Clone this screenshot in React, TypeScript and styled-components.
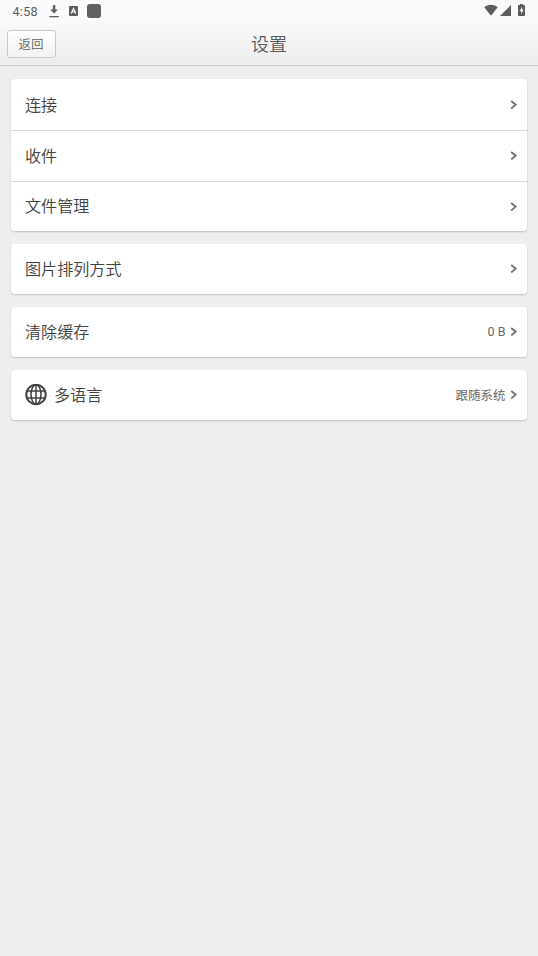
import React from 'react';
import styled, { createGlobalStyle } from 'styled-components';

type Item = {
  label: string;
  value?: string;
  globe?: boolean;
};

const groups: Item[][] = [
  [{ label: '连接' }, { label: '收件' }, { label: '文件管理' }],
  [{ label: '图片排列方式' }],
  [{ label: '清除缓存', value: '0 B' }],
  [{ label: '多语言', value: '跟随系统', globe: true }],
];

const DownloadIcon = () => (
  <svg width="10" height="13" viewBox="0 0 10 13">
    <path d="M3.900 0h2.400v4.500H9L5.100 8.600 1.200 4.500h2.700z" fill="#606060" />
    <path d="M0.400 11h9.400v1.300H0.400z" fill="#606060" />
  </svg>
);

const LetterIcon = () => (
  <svg width="9" height="10" viewBox="0 0 9 10">
    <rect width="9" height="10" rx="1.2" fill="#5c5c5c" />
    <path d="M2.200 7.600 4.500 2.400 6.800 7.600M3.200 6h2.600" fill="none" stroke="#fff" strokeWidth="1.200" />
  </svg>
);

const WifiIcon = () => (
  <svg width="14" height="12" viewBox="0 0 14 12">
    <path d="M7 11.800 0.300 3.200C2 1.600 4.300 0.700 7 0.700s5 .9 6.700 2.500z" fill="#5c5c5c" />
  </svg>
);

const SignalIcon = () => (
  <svg width="11" height="11" viewBox="0 0 11 11">
    <path d="M11 0v11H0z" fill="#5c5c5c" />
  </svg>
);

const BatteryIcon = () => (
  <svg width="7" height="12" viewBox="0 0 7 12">
    <path d="M2.100 0h2.800v1.100h1.300q.8 0 .8.8v9.300q0 .8-.8.8H.8q-.8 0-.8-.8V1.900q0-.8.8-.8h1.300z" fill="#5c5c5c" />
    <path d="M4.200 2.700 1.500 6.900h1.600v3.200l2.500-4.400H4.200z" fill="#fff" />
  </svg>
);

const GlobeIcon = () => (
  <svg width="22" height="22" viewBox="0 0 22 22" fill="none" stroke="#404040" strokeWidth="2">
    <circle cx="11" cy="10.500" r="9.700" />
    <ellipse cx="11" cy="10.500" rx="5" ry="9.700" strokeWidth="1.500" />
    <path d="M11 1v19M2 7h18M2 14h18" strokeWidth="1.500" />
  </svg>
);

const ArrowIcon = () => (
  <svg width="7" height="9" viewBox="0 0 7 9">
    <path d="M1.200 1 5.700 4.700 1.200 8.400" fill="none" stroke="#737373" strokeWidth="1.900" />
  </svg>
);

const App = () => {
  return (
    <>
      <GlobalStyle />
      <Header>
        <StatusBar>
          <StatusLeft>
            <Time>4:58</Time>
            <DownloadIcon />
            <LetterIcon />
            <AppDot />
          </StatusLeft>
          <StatusRight>
            <WifiIcon />
            <SignalIcon />
            <BatteryIcon />
          </StatusRight>
        </StatusBar>
        <NavBar>
          <BackButton>返回</BackButton>
          <Title>设置</Title>
        </NavBar>
      </Header>
      <Content>
        {groups.map((items) => (
          <Card key={items[0].label}>
            {items.map((item) => (
              <Row key={item.label}>
                {item.globe && <GlobeIcon />}
                <Label>{item.label}</Label>
                {item.value && <Value>{item.value}</Value>}
                <ArrowIcon />
              </Row>
            ))}
          </Card>
        ))}
      </Content>
    </>
  );
};

export default App;

const GlobalStyle = createGlobalStyle`
  * {
    box-sizing: border-box;
  }
  body {
    margin: 0;
    min-height: 100vh;
    background: #eeeeee;
    font-family: Roboto, 'Noto Sans CJK SC', sans-serif;
    font-weight: 350;
  }
  svg {
    display: block;
    flex-shrink: 0;
  }
`
const Header = styled.header`
  height: 66px;
  border-bottom: 1px solid #c8c8c8;
  background: linear-gradient(#fafafa 0, #fafafa 22px, #ececec 100%);
`
const StatusBar = styled.div`
  display: flex;
  align-items: center;
  justify-content: space-between;
  height: 22px;
  padding: 0 13px 0 12.5px;
`
const StatusLeft = styled.div`
  display: flex;
  align-items: center;
`
const Time = styled.span`
  width: 36.5px;
  color: #5c5c5c;
  font-size: 12.5px;
  font-weight: 400;
  letter-spacing: 0.3px;

  & + svg {
    margin-right: 10px;
  }
`
const AppDot = styled.span`
  width: 14px;
  height: 14px;
  margin-left: 8.5px;
  border-radius: 3px;
  background: #606060;
`
const StatusRight = styled.div`
  display: flex;
  align-items: center;
  margin-top: -2px;

  svg:nth-child(2) {
    margin: 0 7px 0 2px;
  }
`
const NavBar = styled.div`
  display: grid;
  grid-template-columns: 49px 1fr 49px;
  align-items: center;
  height: 43px;
  padding: 0 7px;
`
const BackButton = styled.button`
  height: 28px;
  padding: 0 1px 0 0;
  color: #606060;
  font-family: inherit;
  font-size: 12.5px;
  font-weight: 350;
  border: 1px solid #c8c8c8;
  border-radius: 3px;
  background: linear-gradient(#ffffff, #f2f2f2);
`
const Title = styled.h1`
  margin: 0;
  padding-bottom: 1px;
  color: #5a5a5a;
  font-size: 18px;
  font-weight: 350;
  text-align: center;
`
const Content = styled.main`
  display: flex;
  flex-direction: column;
  gap: 13px;
  padding: 13px 11px;
`
const Card = styled.section`
  border-radius: 4px;
  background: #ffffff;
  box-shadow: 0 1px 2px rgba(0, 0, 0, 0.2);
`
const Row = styled.div`
  display: flex;
  align-items: center;
  height: 50px;
  padding: 0 10px 1px 14px;

  &:not(:last-child) {
    height: 51px;
    border-bottom: 1px solid #dcdcdc;
  }
  &:first-child:not(:last-child) {
    height: 52px;
    padding-top: 1px;
  }
  &:last-child:not(:first-child) {
    height: 49px;
  }
`
const Label = styled.span`
  flex: 1;
  padding-bottom: 2px;
  color: #404040;
  font-size: 16.1px;

  svg + & {
    margin-left: 7px;
  }
`
const Value = styled.span`
  margin-right: 4.5px;
  color: #666666;
  font-size: 12.5px;
  font-weight: 400;
`
